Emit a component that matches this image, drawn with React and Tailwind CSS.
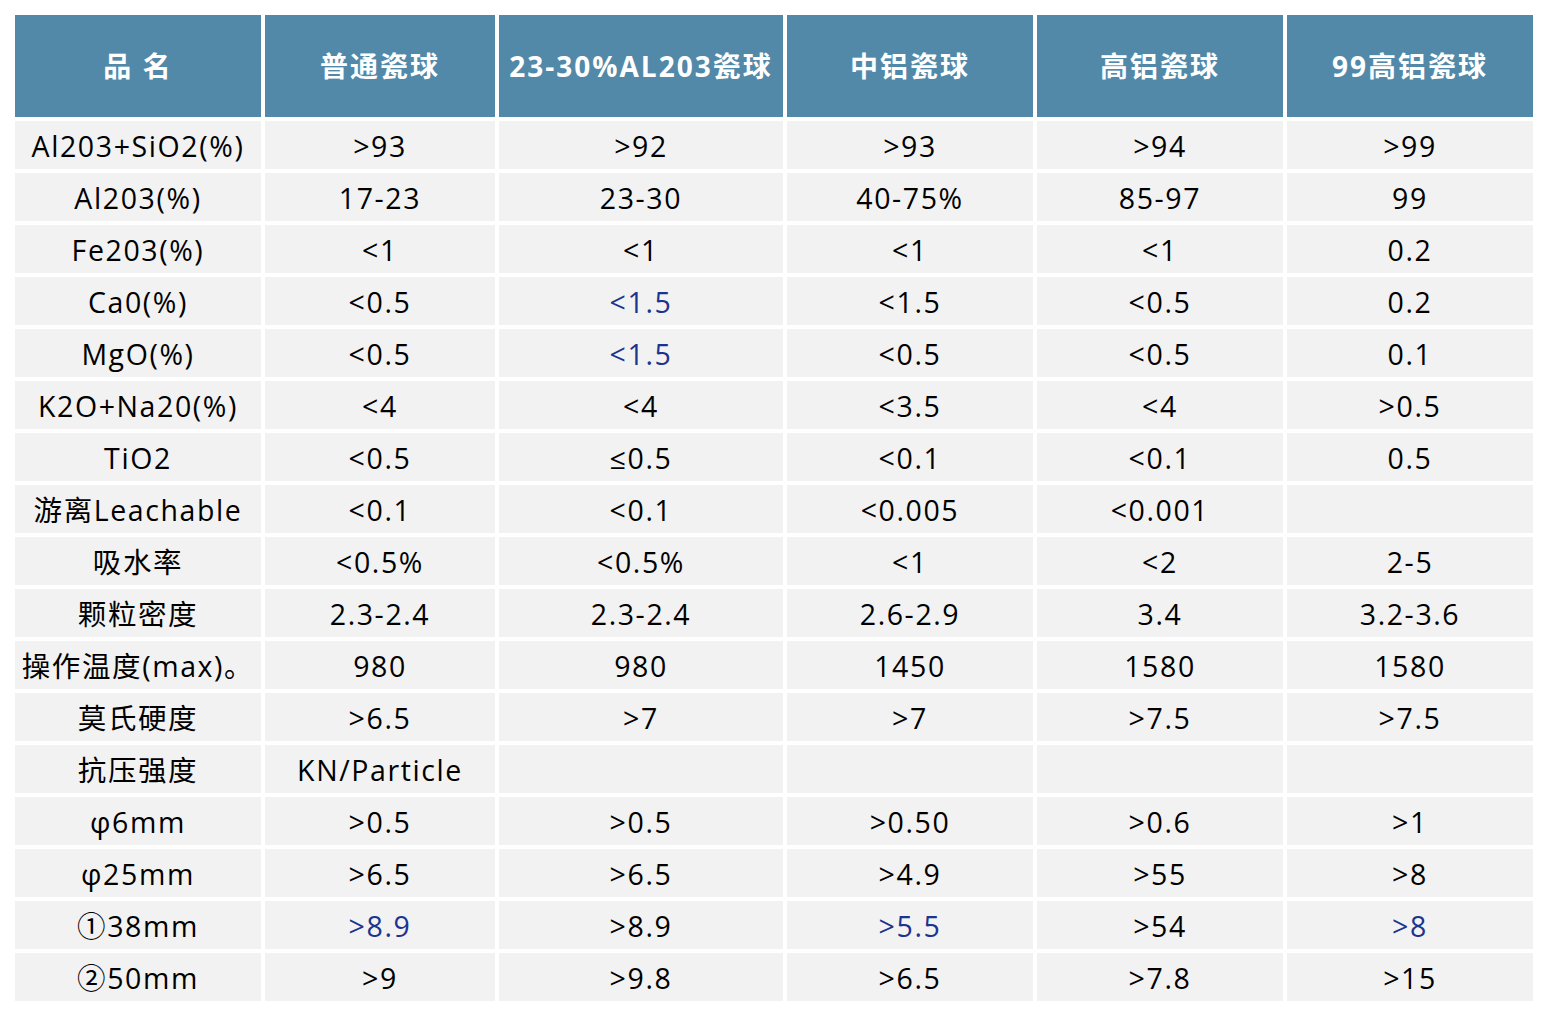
const headers = ["品 名", "普通瓷球", "23-30%AL203瓷球", "中铝瓷球", "高铝瓷球", "99高铝瓷球"];

// "*" prefix marks a value printed in blue
const rows = [
  ["Al203+SiO2(%)", ">93", ">92", ">93", ">94", ">99"],
  ["Al203(%)", "17-23", "23-30", "40-75%", "85-97", "99"],
  ["Fe203(%)", "<1", "<1", "<1", "<1", "0.2"],
  ["Ca0(%)", "<0.5", "*<1.5", "<1.5", "<0.5", "0.2"],
  ["MgO(%)", "<0.5", "*<1.5", "<0.5", "<0.5", "0.1"],
  ["K2O+Na20(%)", "<4", "<4", "<3.5", "<4", ">0.5"],
  ["TiO2", "<0.5", "≤0.5", "<0.1", "<0.1", "0.5"],
  ["游离Leachable", "<0.1", "<0.1", "<0.005", "<0.001", ""],
  ["吸水率", "<0.5%", "<0.5%", "<1", "<2", "2-5"],
  ["颗粒密度", "2.3-2.4", "2.3-2.4", "2.6-2.9", "3.4", "3.2-3.6"],
  ["操作温度(max)。", "980", "980", "1450", "1580", "1580"],
  ["莫氏硬度", ">6.5", ">7", ">7", ">7.5", ">7.5"],
  ["抗压强度", "KN/Particle", "", "", "", ""],
  ["φ6mm", ">0.5", ">0.5", ">0.50", ">0.6", ">1"],
  ["φ25mm", ">6.5", ">6.5", ">4.9", ">55", ">8"],
  ["①38mm", "*>8.9", ">8.9", "*>5.5", ">54", "*>8"],
  ["②50mm", ">9", ">9.8", ">6.5", ">7.8", ">15"],
];

export default function App() {
  return (
    <div className="min-h-screen bg-white pl-[15px] pt-[15px] font-['Open_Sans','Noto_Sans_CJK_SC',sans-serif]">
      <div className="grid w-fit grid-cols-[246px_230px_284px_246px_246px_246px] gap-1">
        {/* Header */}
        {headers.map((h) => (
          <div
            key={h}
            className="flex h-[102px] items-center justify-center whitespace-nowrap bg-[#5289a9] text-[28px] font-bold tracking-[2px] text-white"
          >
            {h}
          </div>
        ))}

        {/* Body */}
        {rows.map((row, i) =>
          row.map((cell, j) => {
            const blue = cell.startsWith("*");
            const text = blue ? cell.slice(1) : cell;
            return (
              <div
                key={i + "-" + j}
                className={
                  "flex h-12 items-center justify-center whitespace-nowrap bg-[#f2f2f2] pt-[2px] text-[28.5px] tracking-[1.6px] " +
                  (blue ? "text-[#1a3590]" : "text-black")
                }
              >
                {text}
              </div>
            );
          })
        )}
      </div>
    </div>
  );
}
